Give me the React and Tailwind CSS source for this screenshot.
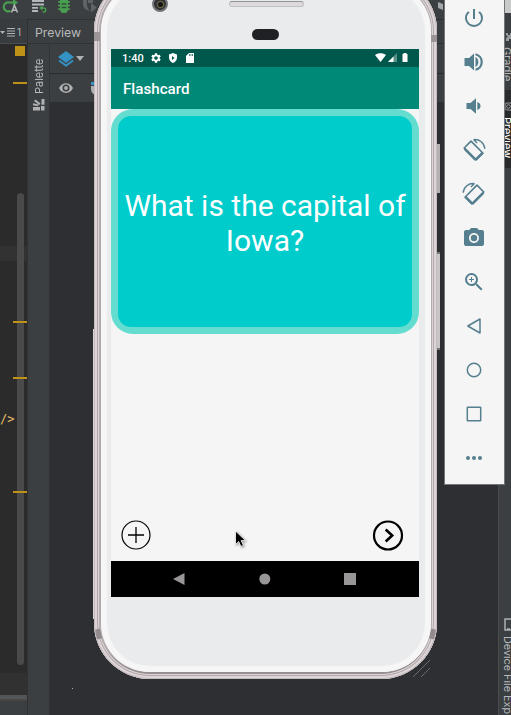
import React from 'react';
import { MdPowerSettingsNew, MdCameraAlt, MdZoomIn, MdSettings } from 'react-icons/md';

const MARKS = ['top-[82px]', 'top-[321px]', 'top-[377px]', 'top-[491px]'];

function Volume({ loud }) {
  return (
    <svg viewBox="0 0 24 24" className="size-6" fill="currentColor">
      {loud ? (
        <>
          <path d="M2.500 8h4.500l5-4.500v17L7 16H2.500z" />
          <path d="M13.500 7c3.800 1.300 3.800 8.700 0 10z" />
          <path d="M13.500 4.200a8 8 0 0 1 0 15.600" fill="none" stroke="currentColor" strokeWidth="2.200" />
        </>
      ) : (
        <>
          <path d="M4.500 9h4l5.500-4.800v15.600L8.500 15h-4z" />
          <path d="M15.300 8c4.300 1.300 4.300 6.700 0 8z" />
        </>
      )}
    </svg>
  );
}

function Rotate({ flip }) {
  return (
    <svg viewBox="0 0 24 24" className={flip ? 'size-6 -scale-x-100' : 'size-6'} fill="none" stroke="currentColor">
      <path d="M9 3.200 20.800 15 14 21.800 2.200 10z" strokeWidth="1.700" strokeLinejoin="round" />
      <path d="M2.700 10.800l11 11M20.800 14.600l-7 7" strokeWidth="2.600" />
      <path d="M11.500 1.600c6-.8 10.800 3.400 11.300 9.200M11.500 1.600l3.600 3.400" strokeWidth="1.400" />
    </svg>
  );
}

function Outline({ children }) {
  return (
    <svg viewBox="0 0 24 24" className="size-6" fill="none" stroke="currentColor" strokeWidth="1.500">
      {children}
    </svg>
  );
}

const TOOLS = [
  <MdPowerSettingsNew className="size-6" />,
  <Volume loud />,
  <Volume />,
  <Rotate />,
  <Rotate flip />,
  <MdCameraAlt className="size-6" />,
  <MdZoomIn className="size-6" />,
  <Outline><path d="M18 5v14L5.800 12z" strokeLinejoin="round" /></Outline>,
  <Outline><circle cx="12" cy="12" r="6.700" /></Outline>,
  <Outline><rect x="5.300" y="5.300" width="13.400" height="13.400" rx=".5" /></Outline>,
  <svg viewBox="0 0 24 24" className="size-6" fill="currentColor">
    <circle cx="6" cy="12" r="2" /><circle cx="12" cy="12" r="2" /><circle cx="18" cy="12" r="2" />
  </svg>,
];

function TopBar() {
  return (
    <div className="h-[19px] shrink-0 bg-[#3c3f41]">
      <svg width="511" height="19" viewBox="0 0 511 19" fill="none">
        <path d="M10.500 10.800A4.500 4.500 0 1 1 9 2.500h5" stroke="#4aa052" strokeWidth="2.200" />
        <path d="M13-1v7l5-3.500z" fill="#4aa052" />
        <path d="M11.500 12.500l3-7 3 7M12.500 10.300h4" stroke="#b4b7b9" strokeWidth="1.500" />
        <path d="M32 1h12M32 4.500h12M32 7.800h6M32 11h6" stroke="#b4b7b9" strokeWidth="1.800" />
        <path d="M40.500 8h3.200a1.800 1.800 0 0 1 0 4h-1" stroke="#4aa052" strokeWidth="1.400" />
        <path d="M42.500 5.500v5L39 8z" fill="#4aa052" />
        <path d="M60 0h8v9a4 4 0 0 1-8 0z" fill="#4aa052" />
        <path d="M58 2h12M58 5.500h12M58 9h12" stroke="#4aa052" strokeWidth="1.600" />
        <path d="M61.500 4h5M61.500 7.500h5" stroke="#30533b" strokeWidth="1.300" />
        <path d="M83 0h4v5c0 2 1 4 3 6-4-1-7-3-7-7zM88 0h5v3h-5zM91 3l6 4.500-6 5z" fill="#606365" />
        <path d="M438 2l5 2v6l-5-2zM445 4h5v5h-5z" fill="#a3a6a8" />
      </svg>
    </div>
  );
}

function EditorPane() {
  return (
    <div className="relative flex w-[27px] shrink-0 flex-col overflow-hidden bg-[#2b2b2b]">
      <div className="flex h-[25px] shrink-0 items-center border-b border-[#4a4d4f] bg-[#393c3e] pt-[2px] font-['Inter',sans-serif] text-[10px] text-[#b4b7b9]">
        <svg width="17" height="12" viewBox="0 0 17 12">
          <path d="M0 5h5L2.500 8z" fill="#afb1b3" />
          <path d="M7 2.500h8M7 5h8M7 7.500h8M7 10h8" stroke="#afb1b3" />
        </svg>
        1
      </div>
      <div className="ml-[15px] mt-[2px] size-[10px] shrink-0 bg-[#be9117]" />
      <div className="mt-[190px] h-[15px] shrink-0 bg-[#323232]" />
      <div className="mt-[150px] h-[16px] shrink-0 font-['DejaVu_Sans_Mono',monospace] text-[12px] leading-[16px] text-[#e8bf6a]">/&gt;</div>
      <div className="mt-auto h-[22px] shrink-0 bg-[#313131]" />
      <div className="h-[4px] shrink-0 bg-[#515658]" />
      <div className="h-[2px] shrink-0 bg-[#4a4641]" />
      <div className="h-[14px] shrink-0 bg-[#3c3f41]" />
      <div className="absolute left-[17px] top-[174px] h-[472px] w-[7px] rounded-full bg-[#4a4a4a]" />
    </div>
  );
}

function PreviewPane() {
  return (
    <div className="flex min-w-0 flex-1 flex-col border-l border-[#2f3133] bg-[#3c3f41] font-['Inter',sans-serif] text-[#b8babc]">
      <div className="flex h-[25px] shrink-0 items-center border-b border-t border-[#2f3133] pl-[7px] pt-[3px] text-[12.300px]">Preview</div>
      <div className="flex min-h-0 flex-1">
        <div className="flex w-[22px] shrink-0 flex-col items-center border-r border-[#323436] bg-[#3b3f41] pt-[12px]">
          <span className="h-[38px] rotate-180 text-[11px] leading-[16px] [writing-mode:vertical-rl]">Palette</span>
          <svg width="12" height="12" viewBox="0 0 12 12" className="mt-[5px]" fill="#afb1b3">
            <path d="M0 8h7v3.500H0zM8 7h3.500v4.500H8zM0 4.200l5.500 1.300L5 7.300 0 6.200zM2.500 0.500l5 4-1.300 1.500L1 2zM8.500 0h3v5.800h-3z" />
          </svg>
        </div>
        <div className="flex min-w-0 flex-1 flex-col bg-[#2d2f33]">
          <div className="flex h-[30px] shrink-0 items-center border-b border-[#292b2d] bg-[#3c3f41] pl-[8px]">
            <svg width="28" height="18" viewBox="0 0 28 18">
              <path d="M8 1l8 6-8 6-8-6z" fill="#3592c4" />
              <path d="M1 10.500l7 5 7-5" fill="none" stroke="#3592c4" strokeWidth="2" />
              <path d="M18 6h8l-4 5z" fill="#afb1b3" />
            </svg>
          </div>
          <div className="flex h-[28px] shrink-0 items-center bg-[#3c3f41] pl-[9px]">
            <svg width="40" height="14" viewBox="0 0 40 14">
              <path d="M0 7c3-6.500 11-6.500 14 0-3 6.500-11 6.500-14 0z" fill="#afb1b3" />
              <circle cx="7" cy="7" r="3.500" fill="#3c3f41" />
              <circle cx="7" cy="7" r="1.900" fill="#afb1b3" />
              <path d="M32 1h6v3h-6z" fill="#3592c4" />
              <path d="M32 5h6v9c-4 0-6-3-6-6z" fill="#afb1b3" />
            </svg>
          </div>
        </div>
      </div>
    </div>
  );
}

function RightStrip() {
  return (
    <div className="flex w-[13px] shrink-0 flex-col border-l border-[#4b4d4c] bg-[#3b3f41] font-['Inter',sans-serif] text-[#b8babc]">
      <svg width="7" height="10" className="ml-[5px] mt-[13px] shrink-0" viewBox="0 0 7 10" fill="#9a9da0">
        <path d="M2 1h2v2h2V1h3v8H7V7H5v2H2V6l2-1-2-2z" />
      </svg>
      <span className="ml-[1px] mt-[5px] h-[42px] w-[14px] shrink-0 text-[11px] leading-[14px] [writing-mode:vertical-rl]">Gradle</span>
      <div className="mt-[1px] flex h-[78px] shrink-0 flex-col bg-[#282a2c] pt-[12px] text-white">
        <svg width="7" height="10" className="ml-[5px] shrink-0" viewBox="0 0 7 10" fill="none" stroke="#9a9da0">
          <rect x="1" y="1" width="9" height="7" rx="2" /><circle cx="4.500" cy="4.500" r="1.800" />
        </svg>
        <span className="ml-[1px] mt-[5px] w-[14px] text-[11px] leading-[14px] [writing-mode:vertical-rl]">Preview</span>
      </div>
      <svg width="7" height="14" className="ml-[5px] mt-auto shrink-0" viewBox="0 0 7 14" fill="none" stroke="#afb1b3" strokeWidth="1.500">
        <path d="M1 1h12v11H1zM3 11h3" />
      </svg>
      <span className="ml-px mt-[4px] h-[79px] w-[14px] shrink-0 whitespace-nowrap text-[10.800px] leading-[14px] [writing-mode:vertical-rl]">Device File Exp</span>
    </div>
  );
}

function Screen() {
  return (
    <div className="relative flex h-[548px] w-[308px] flex-col bg-[#f5f5f5] font-['Roboto',sans-serif] text-white">
      <div className="flex h-[18px] shrink-0 items-center bg-[#00574b] pl-[11px] pr-[10px]">
        <span className="w-[28px] pt-px text-[11px] font-medium leading-none">1:40</span>
        <MdSettings className="size-[12px]" />
        <svg width="10" height="12" viewBox="0 0 10 12" className="ml-[6px]">
          <path d="M5 1l4 1.500v3.200C9 8.300 7 10.300 5 11 3 10.300 1 8.300 1 5.700V2.500z" fill="#fff" />
          <path d="M4 4v4l2.500-2z" fill="#00574b" />
        </svg>
        <svg width="8" height="10" viewBox="0 0 8 10" className="ml-[8px]">
          <path d="M3 0h5v10H0V3z" fill="#fff" />
          <path d="M3.500 1v2M5 1v2M6.500 1v2" stroke="#00574b" strokeWidth=".7" />
        </svg>
        <svg width="34" height="12" viewBox="0 0 34 12" className="ml-auto" fill="#fff">
          <path d="M0 3c3-2.300 8-2.300 11 0L5.500 10z" />
          <path d="M22 1v9h-9z" opacity=".35" />
          <path d="M18.500 4.500V10H13z" />
          <path d="M27.500 2h1V1h3v1h1v8h-5z" />
        </svg>
      </div>
      <div className="flex h-[42px] shrink-0 items-center bg-[#008977] pl-[12px] pt-[3px] text-[15.200px] font-medium">Flashcard</div>
      <div className="flex h-[225px] shrink-0 rounded-[22px] bg-[#64dcd0] p-[7px]">
        <div className="flex flex-1 items-center justify-center rounded-[13px] bg-[#00cccc] pt-[2px] text-center text-[30px] leading-[35px]">
          <p className="whitespace-nowrap">What is the capital of<br />Iowa?</p>
        </div>
      </div>
      <div className="mt-auto flex items-center justify-between pb-[10px] pl-[10px] pr-[15px]">
        <svg width="30" height="32" viewBox="0 0 30 32" fill="none" stroke="#000">
          <circle cx="15" cy="16" r="14" strokeWidth="1.200" />
          <path d="M15 8v16M7 16h16" strokeWidth="1.300" />
        </svg>
        <svg width="32" height="32" viewBox="0 0 32 32" fill="none" stroke="#000" strokeWidth="2.200">
          <circle cx="16" cy="16.500" r="14" />
          <path d="M13.700 10.500l6.500 6-6.500 6" strokeWidth="2.600" />
        </svg>
      </div>
      <div className="flex h-[36px] shrink-0 items-center bg-black">
        <svg width="308" height="36" viewBox="0 0 308 36" fill="#999697">
          <path d="M73.500 12v12L62 18z" />
          <circle cx="153.800" cy="18" r="5.500" />
          <path d="M233 12h12v12h-12z" />
        </svg>
      </div>
    </div>
  );
}

function Phone() {
  return (
    <div className="absolute left-[94px] top-[-25px]">
      <div className="absolute left-[343px] top-[169px] h-[49px] w-[3px] bg-[#b5b1b3]" />
      <div className="absolute left-[343px] top-[277px] h-[98px] w-[3px] border-y-2 border-[#777] bg-[#c9c5c6]" />
      <div className="absolute left-[-1px] top-[354px] h-[290px] w-[3px] bg-[#dcd5d6]" />
      <div className="relative h-[704px] w-[343px] rounded-[56px] bg-[#b3abad] py-[7px] pl-[7px] pr-[6px] shadow-[inset_0_0_0_1px_#c2babc,inset_0_0_0_3px_#ddd5d7,inset_0_0_0_4px_#b0a8aa,inset_0_0_0_5px_#ddd5d7,inset_0_-4px_0_3px_#968e90]">
        <div className="absolute left-0 top-[57px] h-[9px] w-[6px] bg-[#9c9597]" />
        <div className="absolute right-0 top-[60px] h-[7px] w-[6px] bg-[#9c9597]" />
        <div className="absolute left-[2px] top-[654px] h-[10px] w-[5px] rotate-[-12deg] bg-[#918b8d]" />
        <div className="absolute right-[2px] top-[654px] h-[10px] w-[5px] rotate-[12deg] bg-[#918b8d]" />
        <div className="relative h-full w-full rounded-[49px] bg-[#e9ebed] pl-[10px] pt-[67px] shadow-[inset_0_0_1px_6px_#f6f6f6]">
          <div className="absolute left-[51px] top-[14px] flex size-[16px] items-center justify-center rounded-full border-2 border-[#74767a] bg-[#303236]">
            <div className="size-[5px] rounded-full bg-[#151515] shadow-[0_0_1px_1px_#77704b]" />
          </div>
          <div className="absolute left-[128px] top-[19px] h-[6px] w-[75px] rounded-full border border-[#bfc2c4] border-t-[#8d979b] bg-[#dedadb]" />
          <div className="absolute left-[151px] top-[47px] h-[11px] w-[27px] rounded-full bg-[#202124]" />
          <Screen />
        </div>
      </div>
    </div>
  );
}

export default function App() {
  return (
    <div className="relative flex h-[715px] w-[511px] flex-col overflow-hidden bg-[#3c3f41]">
      <TopBar />
      <div className="flex min-h-0 flex-1">
        <EditorPane />
        <PreviewPane />
        <RightStrip />
      </div>
      {MARKS.map((m) => (
        <div key={m} className={`absolute left-[13px] h-[2px] w-[14px] bg-[#be9117] ${m}`} />
      ))}
      <div className="absolute left-[72px] top-[688px] size-px bg-[#aaa]" />
      <Phone />
      <svg className="absolute left-[412px] top-[659px]" width="20" height="19" fill="none" stroke="#77797c" strokeWidth=".8">
        <path d="M1 18L18 1M9 18l9-9" />
      </svg>
      <div className="absolute left-[505px] top-0 h-[13px] w-[6px] bg-[#c9caca]" />
      <div className="absolute left-[444px] top-0 h-[485px] w-[61px] overflow-hidden border-x border-b border-[#737576] bg-[#f5f5f5] pr-px text-[#557f8e]">
        <div className="-mt-1 flex flex-col">
          {TOOLS.map((t, i) => (
            <div key={i} className="flex h-11 items-center justify-center">{t}</div>
          ))}
        </div>
      </div>
      <svg className="absolute left-[235px] top-[530px] drop-shadow-[1px_1px_1px_#0006]" width="12" height="18" viewBox="0 0 12 18">
        <path d="M.5 1v13.500l3.200-3 2.200 5 2.500-1.100-2.200-4.800H10.500z" fill="#000" stroke="#fff" strokeWidth=".8" />
      </svg>
    </div>
  );
}
